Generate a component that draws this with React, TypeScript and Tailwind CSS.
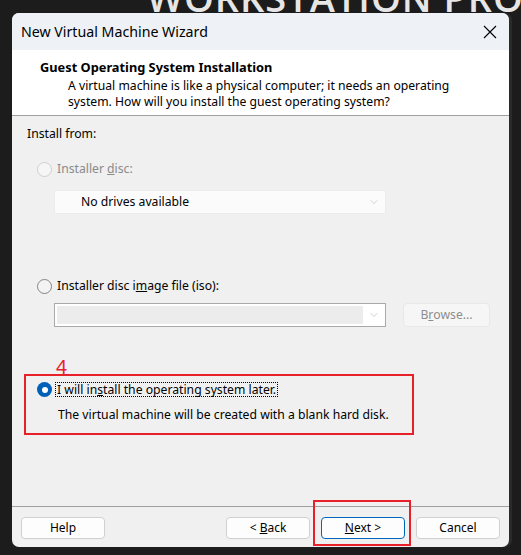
import { ChevronDown } from "lucide-react";

const ui = { fontFamily: '"Noto Sans", "Open Sans", sans-serif' };

function Radio({ state }: { state: "off" | "disabled" | "on" }) {
  if (state === "on") {
    return (
      <span className="flex h-[15px] w-[15px] shrink-0 items-center justify-center rounded-full bg-[#005fb8]">
        <span className="h-[6px] w-[6px] rounded-full bg-white" />
      </span>
    );
  }
  return (
    <span
      className={
        state === "disabled"
          ? "h-[15px] w-[15px] shrink-0 rounded-full border border-[#cfcfcf] bg-[#f6f6f6]"
          : "h-[15px] w-[15px] shrink-0 rounded-full border border-[#858585] bg-[#f3f3f3]"
      }
    />
  );
}

function Btn({ children, primary }: { children: React.ReactNode; primary?: boolean }) {
  return (
    <button
      className={`flex h-[22px] w-[84px] items-center justify-center rounded-[4px] bg-[#fdfdfd] text-[12px] text-black ${
        primary ? "border border-[#0067c0]" : "border border-[#d0d0d0]"
      }`}
    >
      {children}
    </button>
  );
}

export default function App() {
  return (
    <div className="relative h-[555px] w-[521px] overflow-hidden bg-[#1c1c1c]" style={ui}>
      {/* product banner behind the dialog */}
      <div className="flex h-[13px] items-end overflow-hidden pl-[147px]">
        <span
          className="mb-[-3px] whitespace-nowrap text-[38px] font-semibold uppercase leading-[38px] tracking-[1px] text-[#e6e6e6]"
          style={{ fontFamily: '"Open Sans", sans-serif' }}
        >
          Workstation Pro
        </span>
      </div>

      <div className="ml-[12px] flex h-[534px] w-[497px] flex-col overflow-hidden rounded-[7px] bg-[#f0f0f0] shadow-[3px_0_0_#2a2a2a]">
        {/* title bar */}
        <div className="flex h-[37px] items-center justify-between bg-[#eef2f6] pl-[9px] pr-[12px]">
          <span className="text-[14.2px] text-black">New Virtual Machine Wizard</span>
          <svg width="14" height="14" viewBox="0 0 14 14" className="text-black">
            <path d="M1 1L13 13M13 1L1 13" stroke="currentColor" strokeWidth="1.1" />
          </svg>
        </div>

        {/* header */}
        <div className="h-[66px] border-b border-[#a0a0a0] bg-white pl-[28px] pt-[9px]">
          <div className="text-[12.8px] font-bold leading-[16px] text-black">Guest Operating System Installation</div>
          <div className="mt-[3px] pl-[28px] text-[12.2px] leading-[15.5px] text-black">
            A virtual machine is like a physical computer; it needs an operating
            <br />
            system. How will you install the guest operating system?
          </div>
        </div>

        {/* body */}
        <div className="flex flex-1 flex-col pl-[15px] text-[12.2px]">
          <div className="mt-[10px] leading-[16px] text-black">Install from:</div>

          <div className="mt-[19px] flex items-center gap-[5px] pl-[10px] leading-[16px] text-[#8a8a8a]">
            <Radio state="disabled" />
            <span>
              Installer <u>d</u>isc:
            </span>
          </div>
          <div className="ml-[27px] mt-[13px] flex h-[24px] w-[332px] items-center justify-between border border-[#ececec] bg-[#fbfbfb] pl-[26px] pr-[5px]">
            <span className="text-black">No drives available</span>
            <ChevronDown className="h-[12px] w-[12px] text-[#bdbdbd]" strokeWidth={1.3} />
          </div>

          <div className="mt-[64px] flex items-center gap-[5px] pl-[10px] leading-[16px] text-black">
            <Radio state="off" />
            <span>
              Installer disc i<u>m</u>age file (iso):
            </span>
          </div>
          <div className="mt-[9px] flex items-center">
            <div className="ml-[27px] flex h-[24px] w-[332px] items-center border border-[#a9a9a9] bg-white p-[2px] pr-[5px]">
              <div className="h-full w-[306px] bg-[#ececec]" />
              <ChevronDown className="ml-auto h-[12px] w-[12px] text-[#b5b5b5]" strokeWidth={1.3} />
            </div>
            <div className="ml-[17px] flex h-[24px] w-[87px] items-center justify-center rounded-[4px] border border-[#e8e8e8] bg-[#f6f6f6] text-[#8d8d8d]">
              B<u>r</u>owse...
            </div>
          </div>

          <div className="mt-[55px] flex items-center gap-[3px] pl-[10px] text-black">
            <Radio state="on" />
            <span className="border border-dotted border-black px-[1px] leading-[13px]">
              I will in<u>s</u>tall the operating system later.
            </span>
          </div>
          <div className="mt-[10px] pl-[31px] leading-[16px] text-black">
            The virtual machine will be created with a blank hard disk.
          </div>
        </div>

        {/* footer */}
        <div className="flex h-[41px] items-start border-t border-[#a0a0a0] px-[9px] pt-[10px]">
          <Btn>Help</Btn>
          <div className="ml-auto flex gap-[11px]">
            <Btn>
              &lt;&nbsp;<u>B</u>ack
            </Btn>
            <Btn primary>
              <u>N</u>ext&nbsp;&gt;
            </Btn>
            <Btn>Cancel</Btn>
          </div>
        </div>
      </div>

      {/* step annotation */}
      <span className="absolute left-[56px] top-[356px] text-[19px] leading-[22px] text-[#e8202a]">4</span>
      <div className="absolute left-[24px] top-[374px] h-[61px] w-[390px] border-2 border-[#e8202a]" />
      <div className="absolute left-[313px] top-[500px] h-[46px] w-[98px] border-2 border-[#e8202a]" />
    </div>
  );
}
